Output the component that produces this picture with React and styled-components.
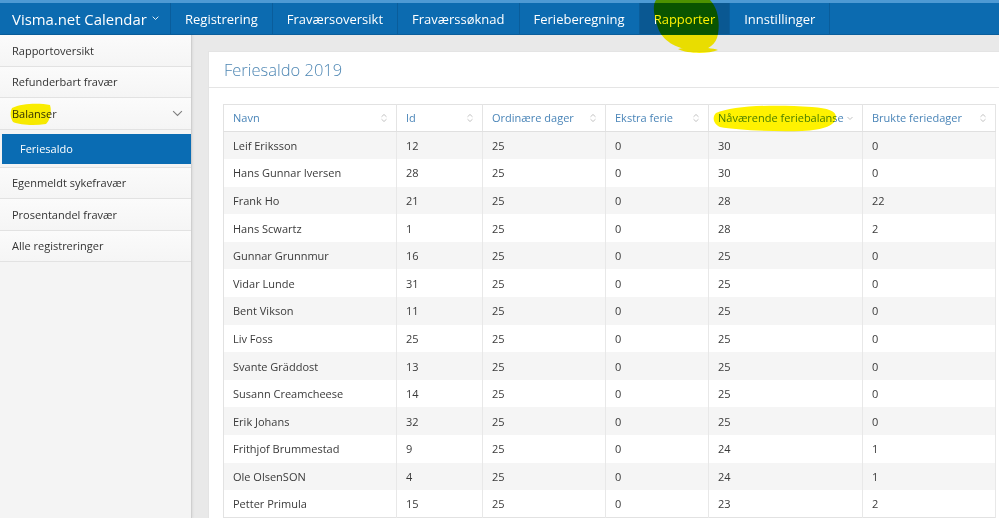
import React from 'react';
import styled, { createGlobalStyle } from 'styled-components';

const GlobalStyle = createGlobalStyle`
  html, body {
    margin: 0;
    padding: 0;
    background: #e9e9e9;
    overflow: hidden;
  }
  body {
    font-family: 'Open Sans', 'Noto Sans', 'DejaVu Sans', sans-serif;
    color: #333333;
  }
  * { box-sizing: border-box; }
`;

const Page = styled.div`
  position: relative;
  width: 999px;
  height: 518px;
  overflow: hidden;
  display: flex;
  flex-direction: column;
`;

const TopNav = styled.nav`
  height: 35px;
  flex: none;
  display: flex;
  background: #0c6bb0;
  border-top: 3px solid #4e9ad4;
  border-bottom: 1px solid #0a5e9c;
`;

const Brand = styled.div`
  width: 171px;
  display: flex;
  align-items: center;
  gap: 5px;
  padding-left: 12px;
  color: #ffffff;
  font-size: 14.9px;
  border-right: 1px solid #0a5d9b;
`;

const NavItem = styled.div`
  display: flex;
  align-items: center;
  padding: 0 14px;
  font-size: 13px;
  color: #ffffff;
  border-right: 1px solid #0a5d9b;
  background: ${p => (p.$active ? '#0a5892' : 'transparent')};
`;

const Body = styled.div`
  flex: 1;
  display: flex;
  min-height: 0;
`;

const Sidebar = styled.aside`
  width: 192px;
  flex: none;
  background: #f4f4f4;
  border-right: 1px solid #cfcfcf;
  box-shadow: 1px 0 2px rgba(0, 0, 0, 0.06);
`;

const SideItem = styled.div`
  height: 31.5px;
  display: flex;
  align-items: center;
  justify-content: space-between;
  padding: 0 8px 0 12px;
  font-size: 11px;
  color: #333333;
  background: linear-gradient(#fbfbfb, #f5f5f5);
  border-bottom: 1px solid #e2e2e2;
`;

const SubMenu = styled.div`
  padding: 4px 0 3px 2px;
  border-bottom: 1px solid #e2e2e2;
`;

const SubItem = styled.div`
  height: 30px;
  display: flex;
  align-items: center;
  padding-left: 18px;
  font-size: 11px;
  color: #ffffff;
  background: #0a6cb3;
`;

const Content = styled.main`
  flex: 1;
  padding: 16px 0 0 16px;
  min-width: 0;
`;

const Panel = styled.section`
  background: #ffffff;
  height: 100%;
  border-left: 1px solid #e4e4e4;
  border-top: 1px solid #e4e4e4;
`;

const PanelHeader = styled.div`
  height: 36px;
  display: flex;
  align-items: center;
  padding-left: 15px;
  border-bottom: 1px solid #e5e5e5;
  font-size: 16.5px;
  font-weight: 300;
  color: #4d86b3;
`;

const PanelBody = styled.div`
  padding: 16px 4px 0 14px;
`;

const Table = styled.table`
  border-collapse: collapse;
  width: 772px;
  table-layout: fixed;
  border: 1px solid #e2e2e2;
  font-size: 11px;
`;

const Th = styled.th`
  height: 27px;
  padding: 0 8px 1px 9px;
  text-align: left;
  font-weight: 400;
  color: #4a85b8;
  background: #ffffff;
  border-right: 1px solid #e4e4e4;
  border-bottom: 1px solid #e0e0e0;
`;

const ThInner = styled.div`
  display: flex;
  align-items: center;
  justify-content: space-between;
`;

const Row = styled.tr`
  height: 27.6px;
  background: ${p => (p.$odd ? '#f5f5f5' : '#ffffff')};
`;

const Td = styled.td`
  padding: 0 9px;
  color: #3a3a3a;
  border-right: 1px solid #e8e8e8;
  white-space: nowrap;
`;

const Marker = styled.svg`
  position: absolute;
  pointer-events: none;
  mix-blend-mode: multiply;
`;

const SortIcon = ({ dir }) => (
  <svg width="8" height="10" viewBox="0 0 8 10" fill="none" stroke="#c4c4c4" strokeWidth="1">
    {dir === 'desc' ? (
      <path d="M1.5 4 L4 6.5 L6.5 4" />
    ) : (
      <>
        <path d="M1.5 3.8 L4 1.5 L6.5 3.8" />
        <path d="M1.5 6.2 L4 8.5 L6.5 6.2" />
      </>
    )}
  </svg>
);

const Chevron = ({ size = 10, color = '#777777', width = 1 }) => (
  <svg width={size} height={size * 0.6} viewBox="0 0 10 6" fill="none" stroke={color} strokeWidth={width}>
    <path d="M1 1 L5 5 L9 1" />
  </svg>
);

const columns = [
  { label: 'Navn', width: 173 },
  { label: 'Id', width: 86 },
  { label: 'Ordinære dager', width: 123 },
  { label: 'Ekstra ferie', width: 103 },
  { label: 'Nåværende feriebalanse', width: 154, sort: 'desc' },
  { label: 'Brukte feriedager', width: 133 },
];

const rows = [
  ['Leif Eriksson', 12, 25, 0, 30, 0],
  ['Hans Gunnar Iversen', 28, 25, 0, 30, 0],
  ['Frank Ho', 21, 25, 0, 28, 22],
  ['Hans Scwartz', 1, 25, 0, 28, 2],
  ['Gunnar Grunnmur', 16, 25, 0, 25, 0],
  ['Vidar Lunde', 31, 25, 0, 25, 0],
  ['Bent Vikson', 11, 25, 0, 25, 0],
  ['Liv Foss', 25, 25, 0, 25, 0],
  ['Svante Gräddost', 13, 25, 0, 25, 0],
  ['Susann Creamcheese', 14, 25, 0, 25, 0],
  ['Erik Johans', 32, 25, 0, 25, 0],
  ['Frithjof Brummestad', 9, 25, 0, 24, 1],
  ['Ole OlsenSON', 4, 25, 0, 24, 1],
  ['Petter Primula', 15, 25, 0, 23, 2],
];

const navItems = ['Registrering', 'Fraværsoversikt', 'Fraværssøknad', 'Ferieberegning', 'Rapporter', 'Innstillinger'];

export default function App() {
  return (
    <Page>
      <GlobalStyle />
      <TopNav>
        <Brand>
          Visma.net Calendar
          <Chevron size={7} color="#ffffff" width={1.3} />
        </Brand>
        {navItems.map(item => (
          <NavItem key={item} $active={item === 'Rapporter'}>{item}</NavItem>
        ))}
      </TopNav>
      <Body>
        <Sidebar>
          <SideItem>Rapportoversikt</SideItem>
          <SideItem>Refunderbart fravær</SideItem>
          <SideItem>
            Balanser
            <Chevron size={11} color="#808080" />
          </SideItem>
          <SubMenu>
            <SubItem>Feriesaldo</SubItem>
          </SubMenu>
          <SideItem>Egenmeldt sykefravær</SideItem>
          <SideItem>Prosentandel fravær</SideItem>
          <SideItem>Alle registreringer</SideItem>
        </Sidebar>
        <Content>
          <Panel>
            <PanelHeader>Feriesaldo 2019</PanelHeader>
            <PanelBody>
              <Table>
                <colgroup>
                  {columns.map(c => <col key={c.label} style={{ width: c.width }} />)}
                </colgroup>
                <thead>
                  <tr>
                    {columns.map(c => (
                      <Th key={c.label}>
                        <ThInner>
                          {c.label}
                          <SortIcon dir={c.sort} />
                        </ThInner>
                      </Th>
                    ))}
                  </tr>
                </thead>
                <tbody>
                  {rows.map((r, i) => (
                    <Row key={r[0]} $odd={i % 2 === 0}>
                      {r.map((v, j) => <Td key={j}>{v}</Td>)}
                    </Row>
                  ))}
                </tbody>
              </Table>
            </PanelBody>
          </Panel>
        </Content>
      </Body>

      {/* gul markering lagt over skjermbildet */}
      <Marker style={{ left: 648, top: 0 }} width="80" height="56" viewBox="0 0 80 56">
        <path d="M8 0 L62 0 C70 8 72 22 70 34 C68 46 58 52 44 50 C28 49 14 40 10 28 C6 16 4 6 8 0 Z" fill="#fff200" />
        <path d="M30 49 C40 47 60 47 70 50 C60 54 40 54 30 49 Z" fill="#fff200" />
      </Marker>
      <Marker style={{ left: 10, top: 102 }} width="42" height="24" viewBox="0 0 42 24">
        <path d="M2 6 C12 1 30 1 40 3 C42 10 40 18 36 22 C24 24 10 23 3 20 C0 15 0 10 2 6 Z" fill="#fff200" />
      </Marker>
      <Marker style={{ left: 712, top: 103 }} width="126" height="30" viewBox="0 0 126 30">
        <path d="M4 10 C20 3 60 1 100 4 C116 5 124 8 124 14 C124 22 112 27 90 28 C60 29 24 27 8 24 C1 21 0 14 4 10 Z" fill="#fff200" />
      </Marker>
    </Page>
  );
}
